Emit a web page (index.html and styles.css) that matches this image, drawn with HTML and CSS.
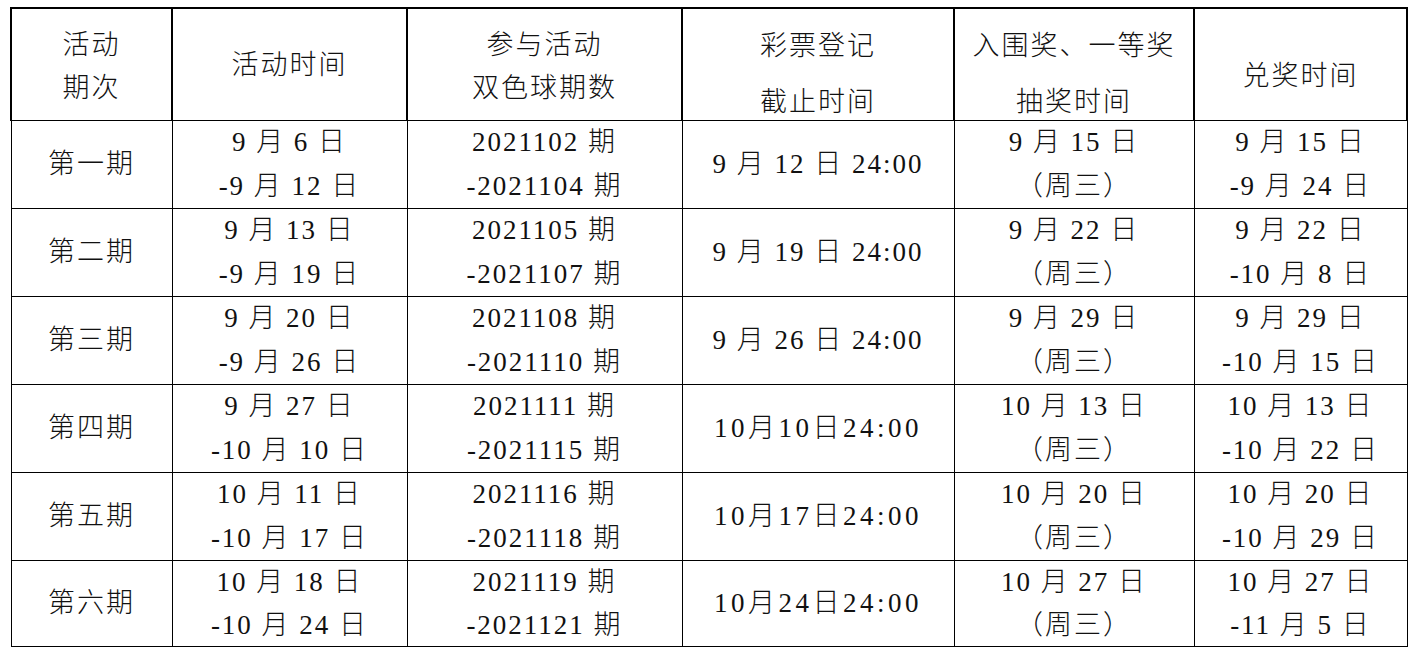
FILE: index.html
```html
<!DOCTYPE html>
<html lang="zh-CN">
<head>
<meta charset="utf-8">
<title>活动时间表</title>
<link rel="stylesheet" href="styles.css">
</head>
<body>
<table class="sched">
  <colgroup>
    <col class="w1"><col class="w2"><col class="w3"><col class="w4"><col class="w5"><col class="w6">
  </colgroup>
  <thead>
    <tr>
      <th class="h-two">活动<br>期次</th>
      <th class="h-one">活动时间</th>
      <th class="h-two">参与活动<br>双色球期数</th>
      <th class="h-wide"><span class="ln">彩票登记</span><span class="ln ln2">截止时间</span></th>
      <th class="h-wide"><span class="ln">入围奖、一等奖</span><span class="ln ln2">抽奖时间</span></th>
      <th class="h-low">兑奖时间</th>
    </tr>
  </thead>
  <tbody>
    <tr>
      <td>第一期</td>
      <td>9 月 6 日<br>-9 月 12 日</td>
      <td>2021102 期<br>-2021104 期</td>
      <td>9 月 12 日 24:00</td>
      <td>9 月 15 日<br>（周三）</td>
      <td>9 月 15 日<br>-9 月 24 日</td>
    </tr>
    <tr>
      <td>第二期</td>
      <td>9 月 13 日<br>-9 月 19 日</td>
      <td>2021105 期<br>-2021107 期</td>
      <td>9 月 19 日 24:00</td>
      <td>9 月 22 日<br>（周三）</td>
      <td>9 月 22 日<br>-10 月 8 日</td>
    </tr>
    <tr>
      <td>第三期</td>
      <td>9 月 20 日<br>-9 月 26 日</td>
      <td>2021108 期<br>-2021110 期</td>
      <td>9 月 26 日 24:00</td>
      <td>9 月 29 日<br>（周三）</td>
      <td>9 月 29 日<br>-10 月 15 日</td>
    </tr>
    <tr>
      <td>第四期</td>
      <td>9 月 27 日<br>-10 月 10 日</td>
      <td>2021111 期<br>-2021115 期</td>
      <td class="tight">10月10日24:00</td>
      <td>10 月 13 日<br>（周三）</td>
      <td>10 月 13 日<br>-10 月 22 日</td>
    </tr>
    <tr>
      <td>第五期</td>
      <td>10 月 11 日<br>-10 月 17 日</td>
      <td>2021116 期<br>-2021118 期</td>
      <td class="tight">10月17日24:00</td>
      <td>10 月 20 日<br>（周三）</td>
      <td>10 月 20 日<br>-10 月 29 日</td>
    </tr>
    <tr class="last">
      <td>第六期</td>
      <td>10 月 18 日<br>-10 月 24 日</td>
      <td>2021119 期<br>-2021121 期</td>
      <td class="tight">10月24日24:00</td>
      <td>10 月 27 日<br>（周三）</td>
      <td>10 月 27 日<br>-11 月 5 日</td>
    </tr>
  </tbody>
</table>
</body>
</html>
```

FILE: styles.css
```css
html, body {
  margin: 0;
  padding: 0;
  background: #ffffff;
}

body {
  padding: 7px 0 0 10px;
  font-family: "Liberation Serif", "Noto Sans CJK SC", serif;
  font-size: 27px;
  font-weight: 300;
  color: #111111;
}

.sched {
  border-collapse: collapse;
  table-layout: fixed;
  width: 1396px;
}

.w1 { width: 161px; }
.w2 { width: 235px; }
.w3 { width: 275px; }
.w4 { width: 272px; }
.w5 { width: 240px; }
.w6 { width: 213px; }

.sched th,
.sched td {
  padding: 0;
  text-align: center;
  vertical-align: middle;
  letter-spacing: 2px;
  font-weight: 300;
  white-space: nowrap;
}

.sched th {
  height: 111px;
  border: 2px solid #000000;
  border-bottom: 1px solid #000000;
  line-height: 43px;
}

.sched th.h-two {
  padding-top: 4px;
  height: 107px;
}

.sched th.h-one {
  padding-top: 2px;
  height: 109px;
}

.sched th.h-wide {
  vertical-align: top;
  padding-top: 20px;
  height: 91px;
}

.sched th .ln {
  display: block;
  line-height: 34px;
}

.sched th .ln2 {
  margin-top: 22px;
}

.sched th.h-low {
  padding-top: 24px;
  height: 87px;
}

.sched td {
  height: 87px;
  border: 1px solid #000000;
  line-height: 43.5px;
}

.sched td.tight {
  letter-spacing: 3.5px;
}

.sched tr.last td {
  height: 85px;
  line-height: 42.5px;
}
```
